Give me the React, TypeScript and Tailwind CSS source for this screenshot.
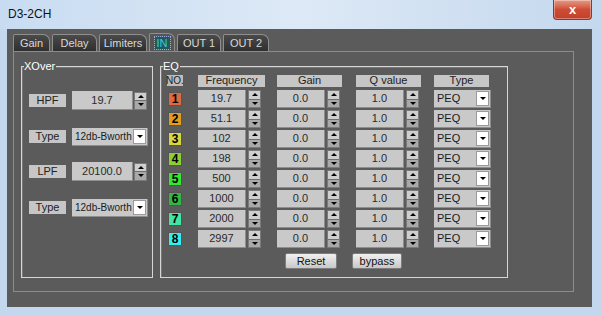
const font = "font-['Liberation_Sans',Arial,sans-serif]";

const tabs = [
  { label: "Gain", w: "w-[37px]" },
  { label: "Delay", w: "w-[45px]" },
  { label: "Limiters", w: "w-[48px]" },
  { label: "IN", w: "w-[26px]", active: true },
  { label: "OUT 1", w: "w-[44px]" },
  { label: "OUT 2", w: "w-[46px]" },
];

const bands = [
  { no: 1, freq: "19.7", color: "bg-[#dd6a3e]" },
  { no: 2, freq: "51.1", color: "bg-[#e19c1c]" },
  { no: 3, freq: "102", color: "bg-[#d6d63e]" },
  { no: 4, freq: "198", color: "bg-[#8ccf32]" },
  { no: 5, freq: "500", color: "bg-[#36e532]" },
  { no: 6, freq: "1000", color: "bg-[#34b644]" },
  { no: 7, freq: "2000", color: "bg-[#42e6a2]" },
  { no: 8, freq: "2997", color: "bg-[#34eeee]" },
];

function Spin({ h = "h-[18px]" }: { h?: string }) {
  return (
    <div className={`flex w-[13px] ${h} flex-col border border-[#7a7a7a] bg-[#b9b9b9]`}>
      <div className="flex flex-1 items-center justify-center border-b border-[#6e6e6e] bg-[#cfcfcf]">
        <div className="h-0 w-0 border-x-[3px] border-b-[3px] border-x-transparent border-b-black" />
      </div>
      <div className="flex flex-1 items-center justify-center bg-[#a9a9a9]">
        <div className="h-0 w-0 border-x-[3px] border-t-[3px] border-x-transparent border-t-black" />
      </div>
    </div>
  );
}

function DropBtn() {
  return (
    <div className="flex h-[15px] w-[13px] shrink-0 items-center justify-center border border-[#9a9a9a] bg-white">
      <div className="h-0 w-0 border-x-[3px] border-t-[3px] border-x-transparent border-t-black" />
    </div>
  );
}

function Field({ value, w }: { value: string; w: string }) {
  return (
    <div
      className={`flex h-[18px] ${w} items-center justify-center border-r border-b border-[#8e8e8e] bg-[#c9c9c9] text-[11px] text-[#2a2a2a]`}
    >
      {value}
    </div>
  );
}

function Combo({ value, w, text = "text-[11px]" }: { value: string; w: string; text?: string }) {
  return (
    <div className={`flex h-[18px] ${w} items-center justify-between border-r border-b border-[#8e8e8e] bg-[#c9c9c9] pl-[3px] pr-[1px] ${text} text-[#1a1a1a]`}>
      <span className="whitespace-nowrap">{value}</span>
      <DropBtn />
    </div>
  );
}

function Label({ text }: { text: string }) {
  return (
    <div className="flex h-[13px] w-[37px] items-center justify-center bg-[#c6c6c6] text-[11px] text-[#222]">
      {text}
    </div>
  );
}

function GroupBox({ title, className, children }: { title: string; className: string; children: React.ReactNode }) {
  return (
    <div className={`relative border border-[#d6d6d6] shadow-[inset_1px_1px_0_#777] ${className}`}>
      <span className="absolute -top-[8px] left-[2px] bg-[#5b5b5b] pr-[1px] text-[11px] leading-[14px] text-white">
        {title}
      </span>
      {children}
    </div>
  );
}

export default function App() {
  return (
    <div className={`flex h-[315px] w-[601px] flex-col bg-[#c3d8ee] ${font}`}>
      <div className="flex h-[29px] items-start justify-between bg-linear-to-r from-[#c8dcf1] via-[#dde9f6] to-[#c4d8ee]">
        <span className="mt-[7px] ml-[8px] text-[12px] leading-[14px] text-[#111]">D3-2CH</span>
        <div className="mr-[9px] flex h-[20px] w-[39px] items-center justify-center rounded-b-[4px] border border-t-0 border-[#8a3a2c] bg-linear-to-b from-[#e49a86] via-[#cf4c34] to-[#c2402a] shadow-[inset_0_0_0_1px_rgba(255,255,255,0.35)]">
          <span className="text-[13px] leading-none font-bold text-white">x</span>
        </div>
      </div>
      <div className="ml-[7px] flex h-[278px] w-[585px] flex-col bg-[#5b5b5b] pt-[5px] pl-[6px]">
        <div className="flex h-[17px] items-end gap-[2px]">
          {tabs.map((t) => (
            <div
              key={t.label}
              className={`flex ${t.w} items-center justify-center rounded-tl-[2px] rounded-tr-[7px] border border-b-0 border-[#8e8e8e] text-[11px] ${
                t.active
                  ? "h-[18px] bg-[#555] text-[#3ccdd2]"
                  : "h-[17px] bg-linear-to-b from-[#4a4a4a] to-[#2f2f2f] text-[#d8d8d8]"
              }`}
            >
              {t.active ? <span className="bg-[#1f5a5e] px-[2px] leading-[12px] outline outline-dotted outline-[#9ad]">{t.label}</span> : t.label}
            </div>
          ))}
        </div>
        <div className="flex h-[241px] w-[561px] gap-[7px] border border-[#8c8c8c] pt-[14px] pl-[7px]">
          <GroupBox title="XOver" className="flex h-[212px] w-[132px] flex-col pt-[24px] pl-[7px]">
            <div className="flex h-[19px] items-center">
              <Label text="HPF" />
              <div className="ml-[6px] flex h-[19px] w-[61px] items-center justify-center border-r border-b border-[#8e8e8e] bg-[#c9c9c9] text-[11px] text-[#2a2a2a]">19.7</div>
              <div className="ml-[1px]">
                <Spin />
              </div>
            </div>
            <div className="mt-[17px] flex h-[19px] items-center">
              <Label text="Type" />
              <div className="ml-[6px]">
                <Combo value="12db-Bworth" w="w-[76px]" text="text-[10px]" />
              </div>
            </div>
            <div className="mt-[16px] flex h-[19px] items-center">
              <Label text="LPF" />
              <div className="ml-[6px] flex h-[19px] w-[61px] items-center justify-center border-r border-b border-[#8e8e8e] bg-[#c9c9c9] text-[11px] text-[#2a2a2a]">20100.0</div>
              <div className="ml-[1px]">
                <Spin />
              </div>
            </div>
            <div className="mt-[17px] flex h-[19px] items-center">
              <Label text="Type" />
              <div className="ml-[6px]">
                <Combo value="12db-Bworth" w="w-[76px]" text="text-[10px]" />
              </div>
            </div>
          </GroupBox>
          <GroupBox title="EQ" className="flex h-[212px] w-[348px] flex-col pt-[7px] pl-[6px]">
            <div className="flex h-[13px] items-center">
              <div className="flex h-[11px] w-[16px] items-center justify-center bg-[#bdbdbd] text-[10px] text-[#222]">NO.</div>
              <div className="ml-[15px] flex h-[12px] w-[67px] items-center justify-center bg-[#c6c6c6] text-[11px] text-[#222]">Frequency</div>
              <div className="ml-[12px] flex h-[12px] w-[65px] items-center justify-center bg-[#c6c6c6] text-[11px] text-[#222]">Gain</div>
              <div className="ml-[14px] flex h-[12px] w-[65px] items-center justify-center bg-[#c6c6c6] text-[11px] text-[#222]">Q value</div>
              <div className="ml-[13px] flex h-[12px] w-[55px] items-center justify-center bg-[#c6c6c6] text-[11px] text-[#222]">Type</div>
            </div>
            <div className="mt-[3px] flex flex-col gap-[2px]">
              {bands.map((b) => (
                <div key={b.no} className="flex h-[18px] items-center">
                  <div className="flex w-[16px] justify-center">
                    <div className={`flex h-[14px] w-[14px] items-center justify-center border border-[#555] ${b.color} text-[12px] font-bold text-black`}>
                      {b.no}
                    </div>
                  </div>
                  <div className="ml-[15px] flex items-center gap-[2px]">
                    <Field value={b.freq} w="w-[48px]" />
                    <Spin />
                  </div>
                  <div className="ml-[16px] flex items-center gap-[2px]">
                    <Field value="0.0" w="w-[48px]" />
                    <Spin />
                  </div>
                  <div className="ml-[16px] flex items-center gap-[2px]">
                    <Field value="1.0" w="w-[48px]" />
                    <Spin />
                  </div>
                  <div className="ml-[15px]">
                    <Combo value="PEQ" w="w-[57px]" />
                  </div>
                </div>
              ))}
            </div>
            <div className="mt-[5px] flex gap-[15px] pl-[118px]">
              <div className="flex h-[16px] w-[52px] items-center justify-center rounded-[2px] border border-[#7d7d7d] bg-linear-to-b from-[#f0f0f0] to-[#c8c8c8] text-[11px] text-[#111]">
                Reset
              </div>
              <div className="flex h-[16px] w-[50px] items-center justify-center rounded-[2px] border border-[#7d7d7d] bg-linear-to-b from-[#f0f0f0] to-[#c8c8c8] text-[11px] text-[#111]">
                bypass
              </div>
            </div>
          </GroupBox>
        </div>
      </div>
    </div>
  );
}
